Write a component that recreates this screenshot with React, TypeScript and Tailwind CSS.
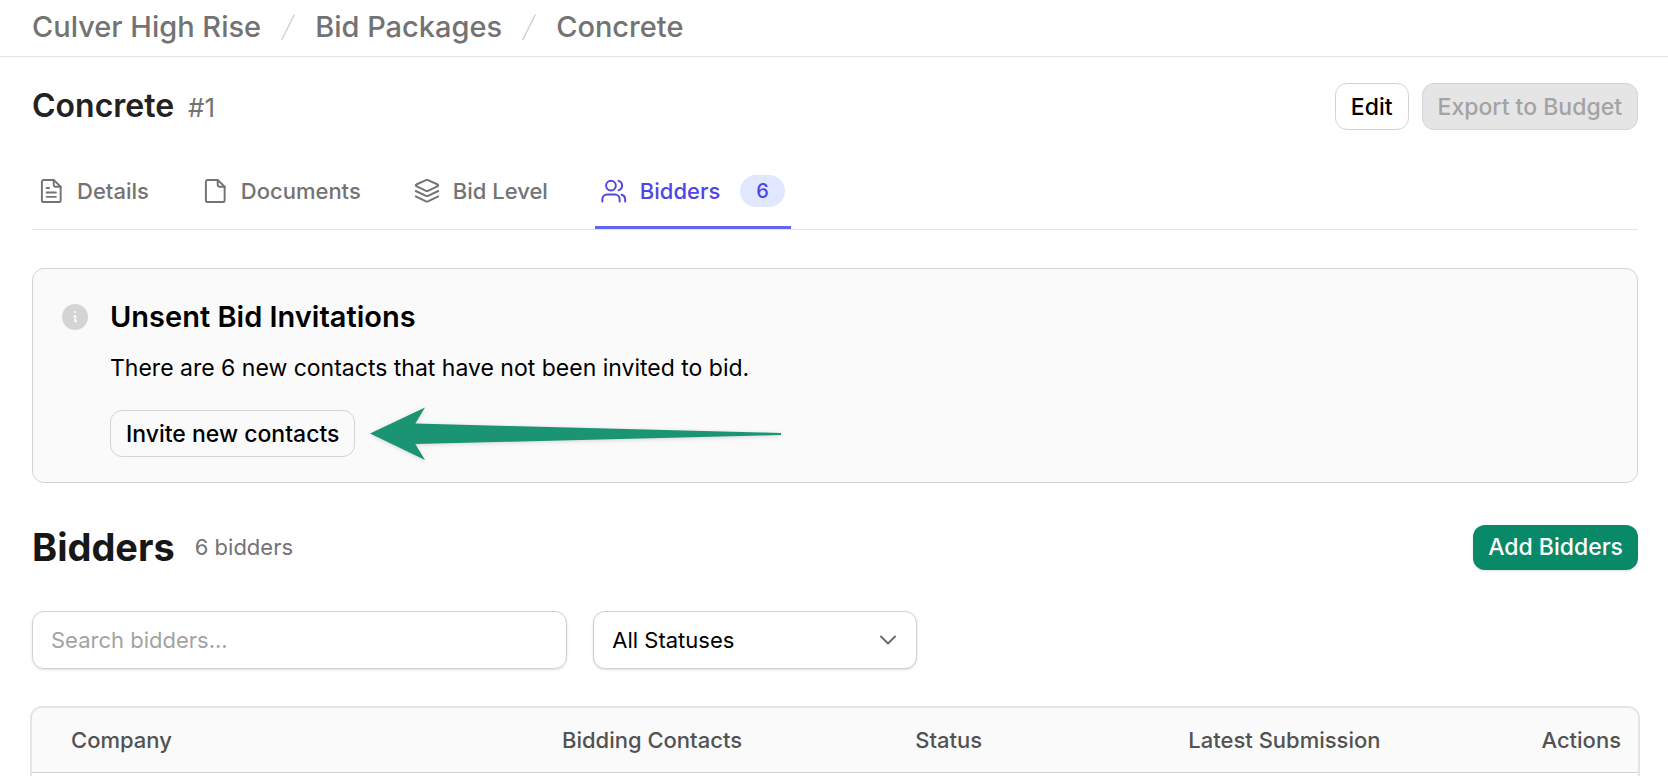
import React from "react";

type IconProps = { children: React.ReactNode };

function TabIcon({ children }: IconProps) {
  return (
    <svg
      className="size-[26px] shrink-0"
      viewBox="0 0 24 24"
      fill="none"
      stroke="currentColor"
      strokeWidth="1.8"
      strokeLinecap="round"
      strokeLinejoin="round"
      aria-hidden="true"
    >
      {children}
    </svg>
  );
}

const tabs = [
  {
    label: "Details",
    icon: (
      <TabIcon>
        <path d="M14.5 1.8H5.3A1.7 1.7 0 0 0 3.6 3.5v17a1.7 1.7 0 0 0 1.7 1.7h13.9a1.7 1.7 0 0 0 1.7-1.7V8z" />
        <path d="M14.5 1.8v4.5a1.7 1.7 0 0 0 1.7 1.7h4.7" />
        <path d="M8 9.2h2.2M8 13.4h8.5M8 17.4h8.5" />
      </TabIcon>
    ),
  },
  {
    label: "Documents",
    icon: (
      <TabIcon>
        <path d="M14.5 1.8H5.3A1.7 1.7 0 0 0 3.6 3.5v17a1.7 1.7 0 0 0 1.7 1.7h13.9a1.7 1.7 0 0 0 1.7-1.7V8z" />
        <path d="M14.5 1.8v4.5a1.7 1.7 0 0 0 1.7 1.7h4.7" />
      </TabIcon>
    ),
  },
  {
    label: "Bid Level",
    icon: (
      <TabIcon>
        <path d="M11.1 1.9a2.2 2.2 0 0 1 1.8 0l9 4.1a.9.9 0 0 1 0 1.6l-9 4.2a2.2 2.2 0 0 1-1.8 0l-9-4.2a.9.9 0 0 1 0-1.6z" />
        <path d="m1.6 12 9.5 4.4a2.2 2.2 0 0 0 1.8 0l9.5-4.4" />
        <path d="m1.6 17 9.5 4.6a2.2 2.2 0 0 0 1.8 0l9.5-4.6" />
      </TabIcon>
    ),
  },
  {
    label: "Bidders",
    count: 6,
    icon: (
      <TabIcon>
        <circle cx="9.2" cy="7" r="4.5" />
        <path d="M1.2 21.6v-2a4.4 4.4 0 0 1 4.4-4.4h7.2a4.4 4.4 0 0 1 4.4 4.4v2" />
        <path d="M16.2 2.6a4.6 4.6 0 0 1 0 8.8" />
        <path d="M19 15.5a4.4 4.4 0 0 1 3.3 4.1v2" />
      </TabIcon>
    ),
  },
];

const crumbs = ["Culver High Rise", "Bid Packages", "Concrete"];

export default function App() {
  return (
    <div className="flex h-screen flex-col overflow-hidden bg-white font-['Inter',sans-serif] text-[22px] leading-8 text-black">
      <nav
        aria-label="Breadcrumb"
        className="shrink-0 border-b border-[#e2e2e2] px-8 pt-[7px] pb-[9px]"
      >
        <ol className="flex items-center gap-5 text-[29px] leading-10 font-medium text-[#737373]">
          {crumbs.map((crumb, i) => (
            <li key={crumb} className="flex items-center gap-5">
              {i > 0 && (
                <svg
                  className="h-9 w-3.5"
                  viewBox="0 0 14 36"
                  fill="none"
                  stroke="#cfcfcf"
                  strokeWidth="1.4"
                  aria-hidden="true"
                >
                  <path d="M13.4 5.5 .6 31" />
                </svg>
              )}
              <a href="#">{crumb}</a>
            </li>
          ))}
        </ol>
      </nav>

      <main className="flex min-h-0 flex-1 flex-col pr-[30px] pl-8">
        <header className="mt-[26px] flex items-start justify-between">
          <div className="flex items-baseline gap-3.5">
            <h1 className="text-[32px] leading-[45px] font-semibold text-[#222]">Concrete</h1>
            <span className="text-[26px] text-[#737373]">#1</span>
          </div>
          <div className="flex gap-[13px] text-[23px] font-medium">
            <button type="button" className="h-[47px] rounded-xl border border-[#d4d4d4] bg-white px-[15px]">
              Edit
            </button>
            <button
              type="button"
              disabled
              className="h-[47px] rounded-xl border border-[#d4d4d4] bg-[#e5e5e5] px-[15px] text-[#a3a3a3]"
            >
              Export to Budget
            </button>
          </div>
        </header>

        <nav
          aria-label="Bid package sections"
          className="mt-[26px] flex gap-[41px] border-b border-[#e5e5e5] font-medium text-[#737373]"
        >
          {tabs.map((tab) => (
            <a
              key={tab.label}
              href="#"
              aria-current={tab.count ? "page" : undefined}
              className={
                tab.count
                  ? "flex h-[73px] items-center gap-[13px] border-b-3 border-[#6366f1] px-1.5 pt-[3px] pb-1 text-[#4f46e5]"
                  : "flex h-[73px] items-center gap-[13px] px-1.5 pt-[3px] pb-[7px]"
              }
            >
              {tab.icon}
              {tab.label}
              {tab.count && (
                <span className="ml-[7px] rounded-full bg-[#e0e7ff] px-4 text-[20px]">{tab.count}</span>
              )}
            </a>
          ))}
        </nav>

        <section className="mt-[38px] flex gap-[22px] rounded-xl border border-[#d4d4d4] bg-[#fafafa] px-[29px] pt-7 pb-[25px]">
          <svg className="mt-[7px] size-[26px] shrink-0" viewBox="0 0 26 26" aria-hidden="true">
            <circle cx="13" cy="13" r="13" fill="#d4d4d4" />
            <circle cx="13" cy="8" r="1.1" fill="#fafafa" />
            <path
              d="M11.8 12.2c1-.6 2-.4 1.8.7l-.7 3.6c-.2 1.1.6 1.3 1.5.7"
              fill="none"
              stroke="#fafafa"
              strokeWidth="1.7"
              strokeLinecap="round"
            />
          </svg>
          <div>
            <h2 className="text-[29px] leading-10 font-semibold">Unsent Bid Invitations</h2>
            <p className="mt-[15px] text-[23px] leading-8">
              There are 6 new contacts that have not been invited to bid.
            </p>
            <div className="mt-[26px] flex items-center gap-3.5">
              <button
                type="button"
                className="h-[47px] rounded-xl border border-[#d4d4d4] px-[15px] text-[23px] font-medium"
              >
                Invite new contacts
              </button>
              <svg
                className="-my-2 h-[60px] w-[420px] drop-shadow-sm"
                viewBox="0 0 420 60"
                aria-hidden="true"
              >
                <path d="M1 29.5 56 3.5l-9.7 16L412 29v2L46.3 40 56 56z" fill="#1b9473" />
              </svg>
            </div>
          </div>
        </section>

        <div className="mt-10 flex items-center justify-between">
          <div className="flex items-center gap-5">
            <h2 className="text-[38px] leading-[48px] font-bold text-[#171717]">Bidders</h2>
            <span className="text-[#737373]">6 bidders</span>
          </div>
          <button
            type="button"
            className="h-[45px] rounded-xl bg-[#088a68] px-[15px] text-[23px] font-medium text-white shadow-sm"
          >
            Add Bidders
          </button>
        </div>

        <div className="mt-10 flex gap-[26px]">
          <input
            type="text"
            aria-label="Search bidders"
            placeholder="Search bidders..."
            className="h-[58px] w-1/3 rounded-xl border border-[#d0d0d0] px-[18px] shadow-sm placeholder:text-[#a3a3a3]"
          />
          <div className="grid w-[324px] items-center">
            <select
              aria-label="Status"
              className="col-start-1 row-start-1 h-[58px] w-full appearance-none rounded-xl border border-[#d0d0d0] bg-white px-[18px] shadow-sm"
            >
              <option>All Statuses</option>
            </select>
            <svg
              className="pointer-events-none col-start-1 row-start-1 mr-5 h-2.5 w-[18px] justify-self-end"
              viewBox="0 0 18 10"
              fill="none"
              stroke="#6b6b6b"
              strokeWidth="2"
              strokeLinecap="round"
              strokeLinejoin="round"
              aria-hidden="true"
            >
              <path d="m2 1.5 7 7 7-7" />
            </svg>
          </div>
        </div>

        <div className="-mx-0.5 mt-[37px] min-h-0 flex-1 overflow-hidden rounded-t-xl border-2 border-b-0 border-[#e5e5e5]">
          <table className="w-full table-fixed text-left">
            <thead className="border-b border-[#d4d4d4] bg-[#fafafa] text-[#525252]">
              <tr className="h-16">
                <th className="w-[33%] pl-[39px] font-medium">Company</th>
                <th className="w-[22%] font-medium">Bidding Contacts</th>
                <th className="w-[17%] font-medium">Status</th>
                <th className="w-[17%] font-medium">Latest Submission</th>
                <th className="pr-[17px] text-right font-medium">Actions</th>
              </tr>
            </thead>
          </table>
        </div>
      </main>
    </div>
  );
}
